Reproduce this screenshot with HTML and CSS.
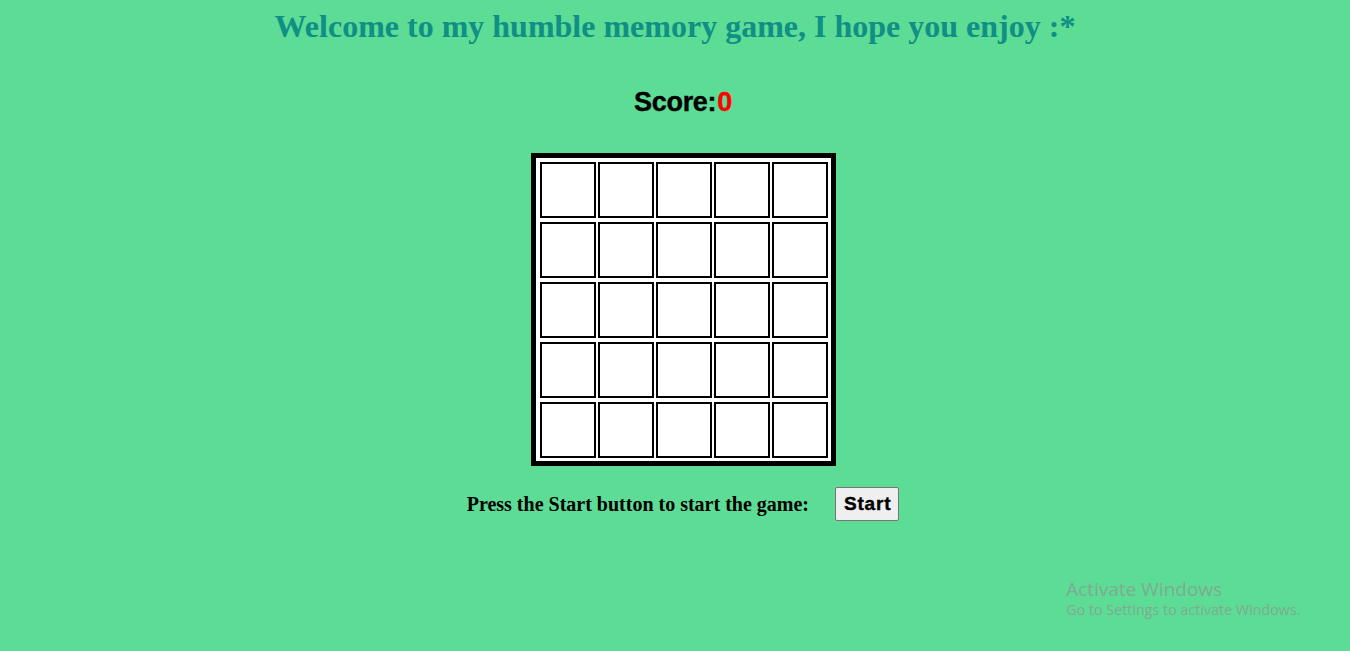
FILE: index.html
```html
<!DOCTYPE html>
<html>
<head>
<meta charset="utf-8">
<title>Memory Game</title>
<link rel="stylesheet" href="styles.css">
</head>
<body>
  <h1 class="title">Welcome to my humble memory game, I hope you enjoy :*</h1>
  <main class="game">
    <h2 class="score">Score:<span class="score-value">0</span></h2>
    <div class="board">
      <div class="cell"></div><div class="cell"></div><div class="cell"></div><div class="cell"></div><div class="cell"></div>
      <div class="cell"></div><div class="cell"></div><div class="cell"></div><div class="cell"></div><div class="cell"></div>
      <div class="cell"></div><div class="cell"></div><div class="cell"></div><div class="cell"></div><div class="cell"></div>
      <div class="cell"></div><div class="cell"></div><div class="cell"></div><div class="cell"></div><div class="cell"></div>
      <div class="cell"></div><div class="cell"></div><div class="cell"></div><div class="cell"></div><div class="cell"></div>
    </div>
    <div class="controls">
      <span class="prompt">Press the Start button to start the game:</span>
      <button class="start-btn">Start</button>
    </div>
  </main>
  <div class="watermark">
    <div class="wm-title">Activate Windows</div>
    <div class="wm-sub">Go to Settings to activate Windows.</div>
  </div>
</body>
</html>
```
FILE: styles.css
```css
html, body {
  margin: 0;
  padding: 0;
  background: #5cdc94;
  height: 100%;
}
body {
  font-family: "Liberation Serif", "Times New Roman", serif;
}
.title {
  margin: 8px 0 0 0;
  font-size: 32px;
  line-height: 36px;
  font-weight: bold;
  text-align: center;
  color: #0f8f85;
}
.game {
  display: flex;
  flex-direction: column;
  align-items: center;
  padding-left: 16px;
}
.score {
  margin: 43px 0 0 0;
  font-family: "Liberation Sans", Arial, sans-serif;
  font-size: 27px;
  line-height: 30px;
  font-weight: bold;
  letter-spacing: -0.3px;
  color: #000;
  -webkit-text-stroke: 0.4px #000;
}
.score-value {
  color: #ff0000;
  -webkit-text-stroke: 0.4px #ff0000;
  margin-left: 1px;
}
.board {
  margin-top: 36px;
  border: 5px solid #000;
  background: #fff;
  padding: 4px 3px 3px 4px;
  display: grid;
  grid-template-columns: repeat(5, 56px);
  grid-auto-rows: 56px;
  column-gap: 2px;
  row-gap: 4px;
}
.cell {
  box-sizing: border-box;
  border: 2px solid #000;
  background: #fff;
}
.controls {
  margin-top: 21px;
  display: flex;
  align-items: center;
  gap: 26px;
}
.prompt {
  font-size: 20px;
  font-weight: bold;
  color: #000;
}
.start-btn {
  font-family: "Liberation Sans", Arial, sans-serif;
  font-size: 19px;
  font-weight: bold;
  letter-spacing: 0.8px;
  color: #000;
  -webkit-text-stroke: 0.4px #000;
  background: #efefef;
  border: 1px solid #767676;
  border-radius: 2px;
  padding: 5px 7px 5px 8px;
  line-height: 22px;
}
.watermark {
  position: fixed;
  left: 1066px;
  top: 577px;
  font-family: "Open Sans", "Noto Sans", sans-serif;
  color: rgba(140, 150, 145, 0.75);
}
.wm-title {
  font-size: 19px;
  line-height: 24px;
}
.wm-sub {
  font-size: 14.3px;
  line-height: 18px;
}
```
